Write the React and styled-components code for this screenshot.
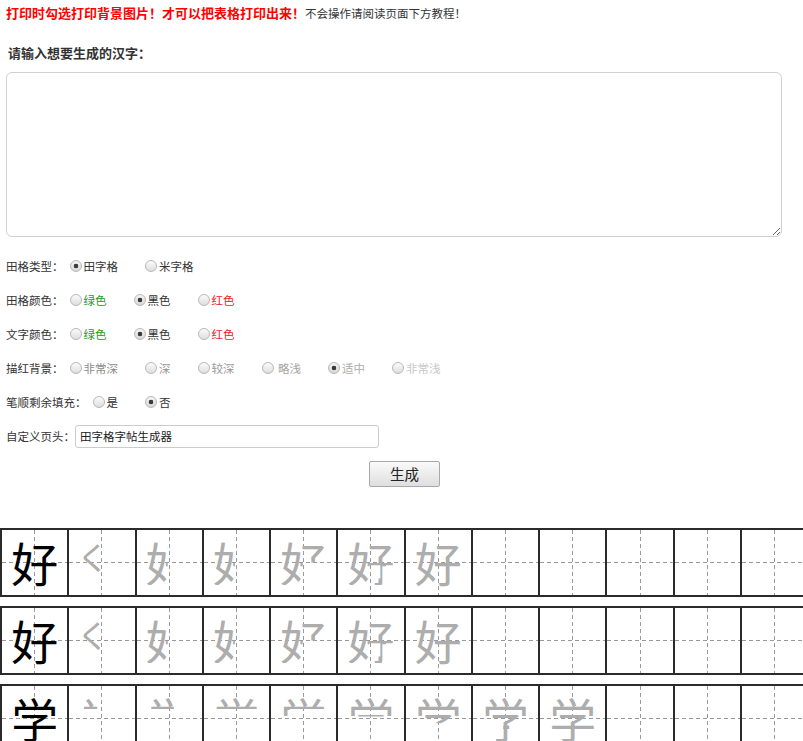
import React from "react";
import styled, {createGlobalStyle} from "styled-components";

const GlobalStyle = createGlobalStyle`
  html, body {
    margin: 0;
    padding: 0;
    overflow: hidden;
    background: #fff;
  }
  body {
    font-family: "Noto Sans CJK SC", sans-serif;
    color: #333;
  }
`

const Page = styled.div`
  padding: 0 6px;
`

const Notice = styled.div`
  line-height: 22px;
  white-space: nowrap;
`

const Warn = styled.span`
  color: #f00;
  font-size: 13px;
  font-weight: bold;
`

const Hint = styled.span`
  color: #333;
  font-size: 11.5px;
`

const Heading = styled.div`
  margin-top: 19px;
  padding-left: 2px;
  font-size: 13px;
  font-weight: bold;
  line-height: 20px;
  color: #333;
`

const TextBox = styled.textarea`
  display: block;
  box-sizing: border-box;
  margin-top: 9px;
  width: 776px;
  height: 165px;
  border: 1px solid #d0d0d0;
  border-radius: 6px;
  background: #fff;
  font-family: inherit;
  outline: none;
`

const Options = styled.div`
  margin-top: 12px;
`

const OptionRow = styled.div`
  display: flex;
  align-items: center;
  height: 34px;
  font-size: 11.5px;
  white-space: nowrap;
`

const Label = styled.span`
  color: #333;
`

const Choice = styled.label`
  display: flex;
  align-items: center;
  margin-right: 21px;
  color: ${p => p.$color || '#333'};
`

const Radio = styled.input.attrs({type: 'radio'})`
  appearance: none;
  box-sizing: border-box;
  width: 12px;
  height: 12px;
  margin: 0 2px 0 6px;
  border: 1px solid #b8b8b8;
  border-radius: 50%;
  background: linear-gradient(#fbfbfb, #dedede);

  &:checked {
    background: radial-gradient(circle, #3a3a3a 0 2px, transparent 2.6px),
    linear-gradient(#f4f4f4, #d8d8d8);
  }
`

const TitleInput = styled.input`
  box-sizing: border-box;
  width: 304px;
  height: 23px;
  padding: 0 4px;
  border: 1px solid #ccc;
  border-radius: 3px;
  font-family: inherit;
  font-size: 11.5px;
  color: #222;
  outline: none;
`

const ButtonRow = styled.div`
  display: flex;
  justify-content: center;
  padding-left: 6px;
  margin-top: 8px;
`

const GenButton = styled.button`
  width: 71px;
  height: 26px;
  border: 1px solid #a9a9a9;
  border-radius: 2px;
  background: linear-gradient(#fafafa, #dedede);
  font-family: inherit;
  font-size: 14.5px;
  color: #222;
  line-height: 1;
  padding: 0;
`

const Sheet = styled.div`
  margin: 41px -6px 0;
  display: flex;
  flex-direction: column;
  gap: 9px;
`

const GridRow = styled.div`
  display: flex;
  width: max-content;
  border: 1px solid #2b2b2b;
`

const Cell = styled.div`
  box-sizing: border-box;
  flex: 0 0 67.27px;
  height: 67px;
  border: 1px solid #2b2b2b;
  display: flex;
  align-items: center;
  justify-content: center;
  overflow: hidden;
  background:
    repeating-linear-gradient(to right, #9a9a9a 0 4px, transparent 4px 7px) center / 100% 1px no-repeat,
    repeating-linear-gradient(to bottom, #9a9a9a 0 4px, transparent 4px 7px) center / 1px 100% no-repeat,
    #fff;
`

const Glyph = styled.span`
  display: block;
  font-family: "Noto Sans CJK SC", sans-serif;
  font-size: ${p => p.$size || 47}px;
  line-height: 1;
  color: ${p => p.$model ? '#000' : '#adadad'};
  transform: translate(${p => p.$dx || 0}px, ${p => (p.$dy || 0) - 1}px);
  clip-path: ${p => p.$clip || 'none'};
`

// partial strokes, drawn by clipping the real character
const HAO = [
    {ch: '好', model: true},
    {ch: 'く', size: 32, dx: -9, dy: -6},
    {ch: '好', clip: 'polygon(0 0, 47% 0, 47% 100%, 0 100%)'},
    {ch: '好', clip: 'polygon(0 0, 47% 0, 47% 100%, 0 100%)'},
    {ch: '好', clip: 'polygon(0 0, 100% 0, 100% 52%, 48% 52%, 48% 100%, 0 100%)'},
    {ch: '好', clip: 'polygon(0 0, 100% 0, 100% 58%, 82% 58%, 82% 100%, 58% 100%, 58% 86%, 70% 86%, 70% 58%, 47% 58%, 47% 100%, 0 100%)'},
    {ch: '好'},
]

const XUE = [
    {ch: '学', model: true},
    {ch: '学', clip: 'inset(0 60% 68% 12%)'},
    {ch: '学', clip: 'inset(0 40% 68% 12%)'},
    {ch: '学', clip: 'inset(0 0 68% 0)'},
    {ch: '学', clip: 'polygon(0 0, 100% 0, 100% 32%, 20% 32%, 20% 50%, 0 50%)'},
    {ch: '学', clip: 'inset(0 0 52% 0)'},
    {ch: '学', clip: 'inset(0 0 38% 0)'},
    {ch: '学', clip: 'polygon(0 0, 100% 0, 100% 64%, 58% 64%, 58% 100%, 30% 100%, 30% 88%, 45% 88%, 45% 64%, 0 64%)'},
    {ch: '学'},
]

const GlyphRow = ({glyphs}) => (
    <GridRow>
        {[...Array(12).keys()].map(i => {
            const g = glyphs[i];
            return (
                <Cell key={i}>
                    {g && <Glyph $model={g.model} $clip={g.clip} $size={g.size} $dx={g.dx} $dy={g.dy}>{g.ch}</Glyph>}
                </Cell>
            )
        })}
    </GridRow>
)

const Group = ({label, name, items}) => (
    <OptionRow>
        <Label>{label}</Label>
        {items.map(item => (
            <Choice key={item.text} $color={item.color}>
                <Radio name={name} defaultChecked={item.checked}/>
                {item.text}
            </Choice>
        ))}
    </OptionRow>
)

export default function App() {
    return (
        <Page>
            <GlobalStyle/>
            <Notice>
                <Warn>打印时勾选打印背景图片！才可以把表格打印出来！</Warn>
                <Hint>不会操作请阅读页面下方教程！</Hint>
            </Notice>
            <Heading>请输入想要生成的汉字：</Heading>
            <TextBox/>

            <Options>
                <Group label="田格类型：" name="type" items={[
                    {text: '田字格', checked: true},
                    {text: '米字格'},
                ]}/>
                <Group label="田格颜色：" name="gridColor" items={[
                    {text: '绿色', color: '#1c9a1c'},
                    {text: '黑色', checked: true},
                    {text: '红色', color: '#e81c1c'},
                ]}/>
                <Group label="文字颜色：" name="textColor" items={[
                    {text: '绿色', color: '#1c9a1c'},
                    {text: '黑色', checked: true},
                    {text: '红色', color: '#e81c1c'},
                ]}/>
                <Group label="描红背景：" name="shade" items={[
                    {text: '非常深', color: '#8a8a8a'},
                    {text: '深', color: '#959595'},
                    {text: '较深', color: '#9a9a9a'},
                    {text: '\u00a0略浅', color: '#a4a4a4'},
                    {text: '适中', color: '#adadad', checked: true},
                    {text: '非常浅', color: '#c8c8c8'},
                ]}/>
                <Group label="笔顺剩余填充：" name="fill" items={[
                    {text: '是'},
                    {text: '否', checked: true},
                ]}/>
                <OptionRow>
                    <Label>自定义页头：</Label>
                    <TitleInput defaultValue="田字格字帖生成器"/>
                </OptionRow>
            </Options>

            <ButtonRow>
                <GenButton>生成</GenButton>
            </ButtonRow>

            <Sheet>
                <GlyphRow glyphs={HAO}/>
                <GlyphRow glyphs={HAO}/>
                <GlyphRow glyphs={XUE}/>
            </Sheet>
        </Page>
    )
}
